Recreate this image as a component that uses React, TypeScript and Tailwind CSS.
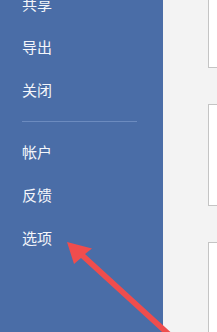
export default function App() {
  const topItems = ['共享', '导出', '关闭']
  const bottomItems = ['帐户', '反馈', '选项']

  return (
    <div className="relative flex h-[332px] w-[217px] overflow-hidden font-['Noto_Sans_CJK_SC',sans-serif]">
      {/* Sidebar */}
      <div className="flex w-[163px] shrink-0 flex-col bg-[#4a6da7] text-[15px] text-[#f4f6fa]">
        <div className="-mt-[18px] flex flex-col">
          {topItems.map((item) => (
            <div key={item} className="flex h-[43px] items-center pl-[22px] leading-none">
              {item}
            </div>
          ))}
        </div>
        <div className="ml-[22px] mr-[26px] mt-[10px] h-px bg-[#6c8bbf]" />
        <div className="mt-[8px] flex flex-col">
          {bottomItems.map((item) => (
            <div key={item} className="flex h-[43px] items-center pl-[22px] leading-none">
              {item}
            </div>
          ))}
        </div>
      </div>

      {/* Content pane */}
      <div className="flex flex-1 flex-col gap-[36px] bg-[#f3f3f3] pl-[45px]">
        <div className="-mt-[12px] h-[80px] shrink-0 border-y border-l border-[#c4c4c4] bg-white" />
        <div className="h-[102px] shrink-0 border-y border-l border-[#c4c4c4] bg-white" />
        <div className="h-[120px] shrink-0 border-y border-l border-[#c4c4c4] bg-white" />
      </div>

      {/* Red arrow annotation */}
      <svg className="pointer-events-none absolute left-0 top-0" width="217" height="332" viewBox="0 0 217 332">
        <polygon
          points="67,242 92,248.5 85,254 177,338 173,342 81,258 74,264"
          fill="#ef4d4d"
        />
      </svg>
    </div>
  )
}
